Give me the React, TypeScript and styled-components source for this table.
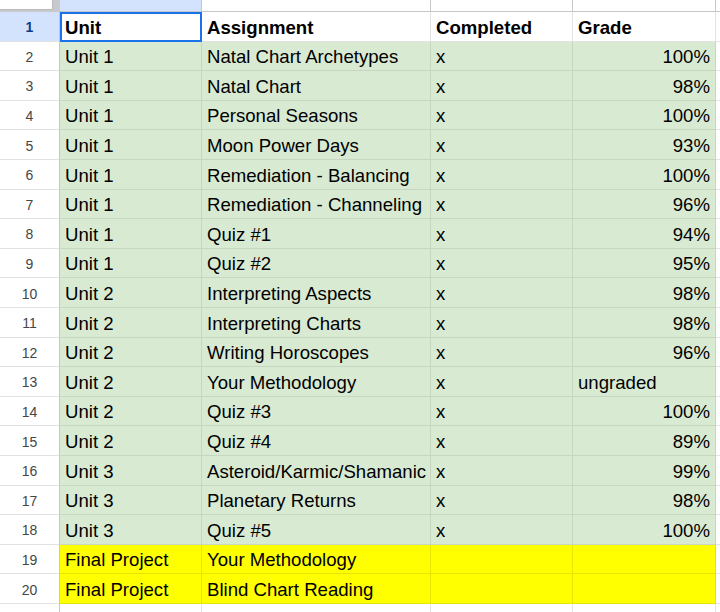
import React from "react";
import styled, { createGlobalStyle } from "styled-components";

const Global = createGlobalStyle`
  html, body { margin: 0; padding: 0; background: #ffffff; }
  body { font-family: "Liberation Sans", Arial, sans-serif; }
`;

type Fill = "green" | "yellow" | "white";

const fills: Record<Fill, string> = {
  green: "#d9ead3",
  yellow: "#ffff00",
  white: "#ffffff",
};

const lines: Record<Fill, string> = {
  green: "#c6d6c0",
  yellow: "#e6e600",
  white: "#e2e3e3",
};

const Sheet = styled.div`
  display: grid;
  grid-template-columns: 60px 142px 229px 142px 143px 20px;
  grid-template-rows: 12px repeat(20, 29.6px) 20px;
  width: 720px;
  height: 612px;
  overflow: hidden;
`;

const Corner = styled.div`
  background: #c7c9cc;
  display: flex;
  flex-direction: column;
  padding: 0 7px 2px 0;
  box-sizing: border-box;
`;

const CornerBox = styled.div`
  flex: 1;
  background: #ffffff;
  border-right: 1px solid #b9bbbe;
  border-bottom: 1px solid #b9bbbe;
`;

const ColHead = styled.div<{ $selected?: boolean }>`
  background: ${(p) => (p.$selected ? "#d3e3fd" : "#ffffff")};
  border-right: 1px solid #c4c7c5;
  border-bottom: 1px solid #c4c7c5;
  box-sizing: border-box;
`;

const RowHead = styled.div<{ $selected?: boolean }>`
  background: ${(p) => (p.$selected ? "#d3e3fd" : "#ffffff")};
  color: ${(p) => (p.$selected ? "#0b3a8a" : "#444746")};
  font-weight: ${(p) => (p.$selected ? 700 : 400)};
  font-size: 14px;
  display: flex;
  align-items: center;
  justify-content: center;
  border-right: 1px solid #c4c7c5;
  border-bottom: 1px solid #e1e3e1;
  box-sizing: border-box;
  padding-top: 2px;
`;

const Cell = styled.div<{ $fill: Fill; $right?: boolean; $bold?: boolean; $active?: boolean }>`
  background: ${(p) => fills[p.$fill]};
  border-right: 1px solid ${(p) => lines[p.$fill]};
  border-bottom: 1px solid ${(p) => lines[p.$fill]};
  box-sizing: border-box;
  display: flex;
  align-items: flex-end;
  justify-content: ${(p) => (p.$right ? "flex-end" : "flex-start")};
  padding: 0 5px 2px 5px;
  font-size: 18.6px;
  line-height: 22px;
  font-weight: ${(p) => (p.$bold ? 700 : 400)};
  color: #000000;
  white-space: nowrap;
  overflow: visible;
  ${(p) =>
    p.$active
      ? `outline: 2px solid #1a73e8; outline-offset: -2px; position: relative;`
      : ""}
`;

type Row = [string, string, string, string];

const rows: Row[] = [
  ["Unit 1", "Natal Chart Archetypes", "x", "100%"],
  ["Unit 1", "Natal Chart", "x", "98%"],
  ["Unit 1", "Personal Seasons", "x", "100%"],
  ["Unit 1", "Moon Power Days", "x", "93%"],
  ["Unit 1", "Remediation - Balancing", "x", "100%"],
  ["Unit 1", "Remediation - Channeling", "x", "96%"],
  ["Unit 1", "Quiz #1", "x", "94%"],
  ["Unit 1", "Quiz #2", "x", "95%"],
  ["Unit 2", "Interpreting Aspects", "x", "98%"],
  ["Unit 2", "Interpreting Charts", "x", "98%"],
  ["Unit 2", "Writing Horoscopes", "x", "96%"],
  ["Unit 2", "Your Methodology", "x", "ungraded"],
  ["Unit 2", "Quiz #3", "x", "100%"],
  ["Unit 2", "Quiz #4", "x", "89%"],
  ["Unit 3", "Asteroid/Karmic/Shamanic", "x", "99%"],
  ["Unit 3", "Planetary Returns", "x", "98%"],
  ["Unit 3", "Quiz #5", "x", "100%"],
  ["Final Project", "Your Methodology", "", ""],
  ["Final Project", "Blind Chart Reading", "", ""],
];

export default function App() {
  return (
    <>
      <Global />
      <Sheet>
        <Corner>
          <CornerBox />
        </Corner>
        <ColHead $selected />
        <ColHead />
        <ColHead />
        <ColHead />
        <ColHead />

        <RowHead $selected>1</RowHead>
        <Cell $fill="white" $bold $active>Unit</Cell>
        <Cell $fill="white" $bold>Assignment</Cell>
        <Cell $fill="white" $bold>Completed</Cell>
        <Cell $fill="white" $bold>Grade</Cell>
        <Cell $fill="white" />

        {rows.map((r, i) => {
          const fill: Fill = r[0] === "Final Project" ? "yellow" : "green";
          const numeric = r[3].endsWith("%");
          return (
            <React.Fragment key={i}>
              <RowHead>{i + 2}</RowHead>
              <Cell $fill={fill}>{r[0]}</Cell>
              <Cell $fill={fill}>{r[1]}</Cell>
              <Cell $fill={fill}>{r[2]}</Cell>
              <Cell $fill={fill} $right={numeric}>{r[3]}</Cell>
              <Cell $fill="white" />
            </React.Fragment>
          );
        })}

        <RowHead />
        <Cell $fill="white" />
        <Cell $fill="white" />
        <Cell $fill="white" />
        <Cell $fill="white" />
        <Cell $fill="white" />
      </Sheet>
    </>
  );
}
